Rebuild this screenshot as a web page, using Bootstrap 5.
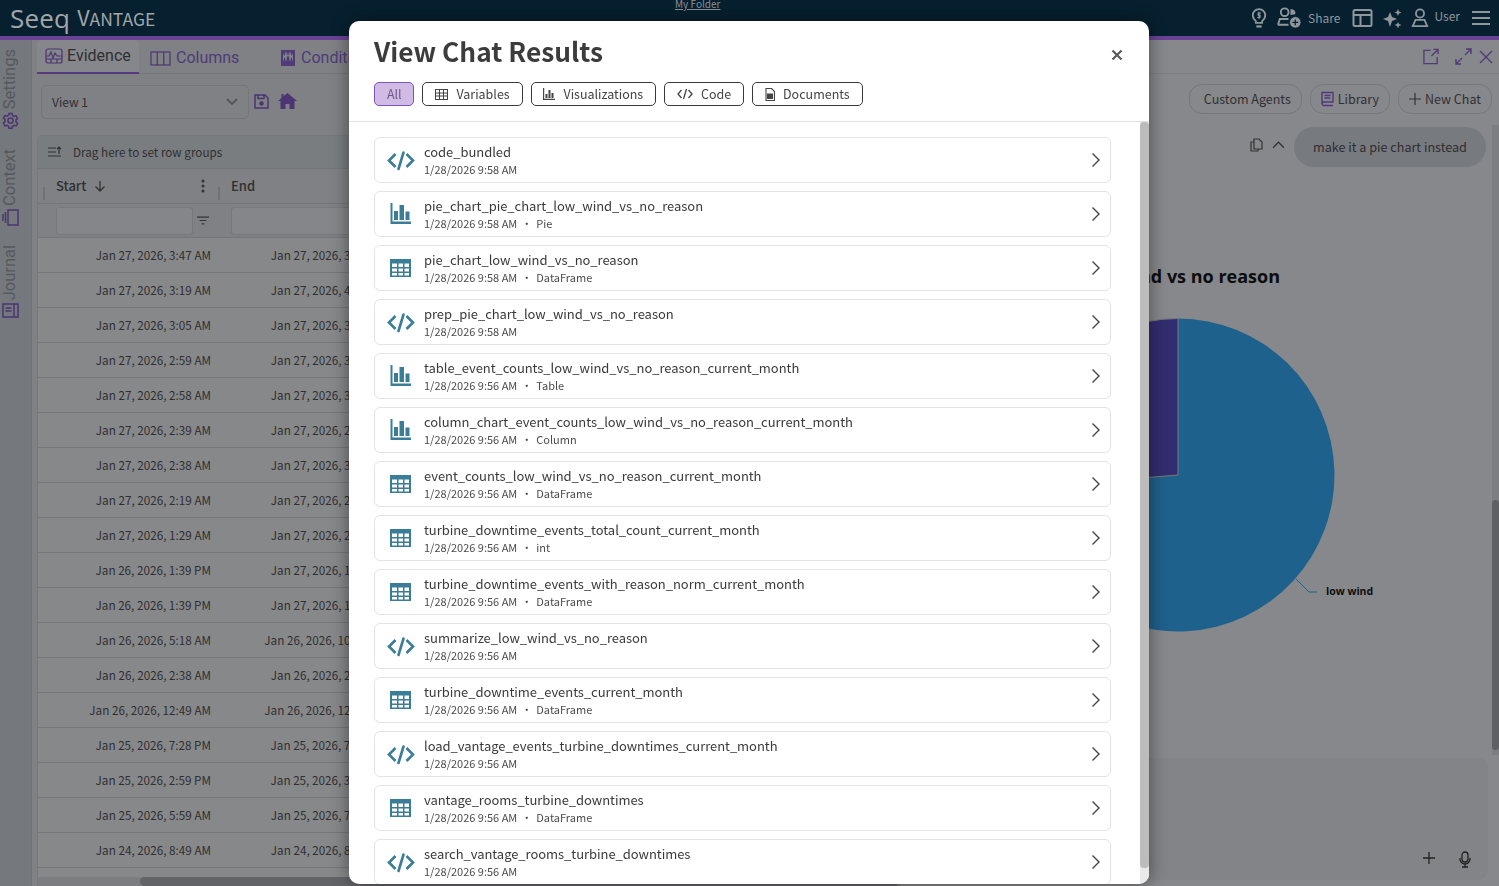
<!DOCTYPE html>
<html lang="en">
<head>
  <meta charset="UTF-8">
  <meta name="viewport" content="width=device-width, initial-scale=1">
  <title>Seeq Vantage</title>
  <link href="https://cdn.jsdelivr.net/npm/bootstrap@5.3.2/dist/css/bootstrap.min.css" rel="stylesheet">
  <style>
    html, body { height: 100%; overflow: hidden; }
    body { font-family: "Noto Sans CJK SC", "Noto Sans", sans-serif; background: #87888b; color: #2c2c2e; }
    svg { display: block; flex-shrink: 0; }

    .top-bar { height: 36px; background: #07202f; color: #8f979c; position: relative; }
    .logo-main { font-family: "Open Sans", sans-serif; font-size: 26px; font-weight: 500; line-height: 34px; letter-spacing: .2px; color: #a2a7aa; margin-left: 10px; }
    .logo-sub { font-size: 21.5px; line-height: 36px; margin-left: 7px; color: #a2a7aa; }
    .logo-sub small { font-size: 17.5px; }
    .folder-link { position: absolute; left: 675px; top: -3px; font-size: 10px; line-height: 13px; color: #8b9296; }
    .top-tools { margin-right: 9px; }
    .top-label { font-size: 12px; line-height: 16px; color: #8f979c; }
    .share-label { margin: 0 12px 0 6px; }
    .user-label { margin: 0 12px 5px 5px; }
    .tool-gap { margin-right: 9px; }
    .bulb-gap { margin-right: 10px; }
    .accent-bar { height: 4px; background: #6a4397; }

    .work-area { height: 846px; }
    .side-rail { width: 32px; background: #75787c; border-right: 1px solid #6f7276; padding: 9px 11px 0 0; }
    .rail-item { color: #55585c; font-family: Roboto, sans-serif; font-size: 16.5px; line-height: 20px; height: 100px; }
    .rail-item.mid { height: 96px; }
    .rail-item span { writing-mode: vertical-rl; transform: rotate(180deg); }
    .rail-item svg { margin-top: 3px; }

    .left-pane { width: 868px; background: #7f8184; padding-left: 5px; }
    .tab-row { height: 34px; border-bottom: 1px solid #74777a; }
    .pane-tab { font-family: Roboto, sans-serif; font-size: 16px; line-height: 20px; color: #4f3b78; height: 34px; padding-top: 2px; }
    .pane-tab.on { color: #2f2f33; background: #85878a; border-bottom: 2px solid #573a80; border-radius: 5px 5px 0 0; width: 102px; padding: 0 0 0 8px; gap: 4px; }
    .tab-columns { margin-left: 11px; width: 131px; gap: 5px; }
    .tab-conditions { gap: 6px; }
    .view-row { height: 61px; padding: 11px 0 0 4px; }
    .view-pick { width: 208px; height: 34px; border: 1px solid #74767a; border-radius: 5px; font-size: 12px; padding: 0 10px; color: #2f2f33; }
    .save-ico { margin: 9px 0 0 5px; }
    .home-ico { margin: 8px 0 0 9px; }

    .data-grid { border: 1px solid #76787b; border-bottom: 0; border-radius: 5px 0 0 0; font-size: 11.7px; color: #2f2f31; background: #87888a; height: 751px; overflow: hidden; position: relative; }
    .group-bar { height: 33px; background: #7a7d80; border-bottom: 1px solid #747679; padding: 0 0 1px 10px; gap: 11px; }
    .head-row { height: 35px; background: #7f8184; border-bottom: 1px solid #747679; font-size: 13px; font-weight: 500; }
    .head-cell { width: 175px; padding-left: 18px; position: relative; }
    .head-cell::before { content: ""; position: absolute; left: 5px; top: 11px; height: 13px; width: 2px; background: #6f7275; }
    .head-dots { position: absolute; left: 163px; }
    .filter-row { height: 34px; background: #7f8184; border-bottom: 1px solid #747679; }
    .filter-cell { width: 175px; padding-left: 18px; gap: 4px; }
    .filter-box { width: 137px; height: 28px; border: 1px solid #76787b; border-radius: 3px; background: #85868a; }
    .grid-line { height: 35px; border-bottom: 1px solid #747679; }
    .grid-val { width: 175px; text-align: right; padding-right: 2px; white-space: nowrap; }
    .grid-scroll { position: absolute; left: 0; right: 0; bottom: 0; height: 9px; background: #7b7d80; }
    .grid-thumb { position: absolute; left: 102px; right: 0; top: 0; bottom: 0; background: #636468; border-radius: 5px; }

    .right-pane { width: 599px; position: relative; background: #87888b; padding-right: 7px; }
    .right-top { height: 34px; border-bottom: 1px solid #7d7f82; margin-right: -7px; padding-right: 6px; }
    .open-ico { margin-right: 16px; }
    .expand-ico { margin-right: 7px; }
    .tool-row { gap: 8px; padding-top: 10px; height: 53px; }
    .chat-pill { height: 30px; border: 1px solid #75777a; border-radius: 13px; padding: 0 10px; font-size: 12.5px; color: #303033; gap: 4px; }
    .pill-agents { padding-left: 14px; }
    .user-msg { height: 40px; gap: 9px; padding-right: 6px; }
    .msg-bubble { background: #777a7e; width: 192px; height: 40px; border-radius: 20px; font-size: 12.6px; color: #2e2e31; }
    .chart-shot { margin-top: 97px; }
    .ask-box { position: absolute; left: 0; right: 11px; bottom: 6px; height: 122px; background: #838487; border-radius: 10px; gap: 24px; padding: 0 17px 12px 0; }
    .pane-track { position: absolute; right: 0; top: 85px; height: 630px; width: 7px; background: #7d7e81; }
    .pane-thumb { position: absolute; left: 0; right: 0; top: 375px; height: 250px; background: #5f6063; border-radius: 4px; }

    .results-modal { display: block; }
    .results-dialog { width: 800px; max-width: 800px; margin: 21px 0 0 349px; height: 863px; }
    .results-dialog .modal-content { height: 863px; border: 0; border-radius: 10px; box-shadow: 0 0 18px rgba(0, 0, 0, .45); overflow: hidden; color: #3b3b3b; }
    .results-head { height: 101px; padding: 0 25px; border-bottom: 1px solid #e2e2e2; position: relative; }
    .results-title { font-size: 26.3px; line-height: 36px; font-weight: 600; padding-top: 12px; margin: 0; color: #3c3c3c; box-sizing: content-box; }
    .close-x { position: absolute; right: 26px; top: 28px; width: 12px; height: 12px; padding: 0; border: 0; background: none; }
    .pick-row { gap: 8px; margin-top: 13px; }
    .pick-btn { height: 24px; border: 1px solid #3a3a3a; border-radius: 5px; font-size: 12.5px; line-height: 20px; padding: 0 11.9px; gap: 8px; background: #fff; color: #444; }
    .pick-btn.on { background: #cfbbe3; border-color: #7f52b3; color: #74598f; }
    .results-body { height: 762px; }
    .results-list { overflow: hidden; padding: 15px 29px 0 25px; }
    .list-track { width: 9px; background: #e9e9e9; position: relative; }
    .list-thumb { position: absolute; left: 0; right: 0; top: 0; height: 746px; background: #bcbcbc; border-radius: 4px; }
    .result-item { height: 46px; margin-bottom: 8px; border: 1px solid #e3e3e6; border-radius: 6px; padding: 0 8px 0 12px; }
    .result-ico { width: 28px; height: 28px; margin-right: 9px; color: #3a7d97; }
    .result-name { font-size: 13px; line-height: 18px; color: #3a3a3a; letter-spacing: -.05px; }
    .result-meta { font-size: 11px; line-height: 17px; color: #4b4b4b; }
    .result-meta i { font-style: normal; margin: 0 4px; }
    .result-next { width: 12px; height: 16px; color: #444; }
  </style>
</head>
<body>

<!-- ICONS -->
<svg width="0" height="0" class="position-absolute">
  <symbol id="ic-code" viewBox="0 0 28 28"><path d="M8.500 8 2 14.500 8.500 21M19.500 8 26 14.500 19.500 21" fill="none" stroke="currentColor" stroke-width="2.600"/><path d="M16.500 6.500 11.500 23" fill="none" stroke="currentColor" stroke-width="2.600" stroke-linecap="round"/></symbol>
  <symbol id="ic-bars" viewBox="0 0 28 28"><path fill="currentColor" d="M3.500 3h2v18.500H24V24H3.500zM7 11h4v9H7zM12.500 5H17v15h-4.500zM18.500 11.500h4V20h-4z"/></symbol>
  <symbol id="ic-table" viewBox="0 0 28 28"><path fill-rule="evenodd" fill="currentColor" d="M3 5h21v18H3zM5 9.500v3.500h5v-3.500zM11.500 9.500v3.500h4.500v-3.500zM17.500 9.500v3.500h4.500v-3.500zM5 14.500V17.500h5v-3zM11.500 14.500v3h4.500v-3zM17.500 14.500v3h4.500v-3zM5 19v2.500h5V19zM11.500 19v2.500h4.500V19zM17.500 19v2.500h4.500V19z"/></symbol>
  <symbol id="ic-next" viewBox="0 0 12 16"><path d="M2.500 1.500 9 8l-6.500 6.500" fill="none" stroke="currentColor" stroke-width="1.400"/></symbol>
</svg>

<!-- TOP BAR -->
<header class="top-bar d-flex align-items-center">
  <span class="logo-main">Seeq</span>
  <span class="logo-sub">V<small>ANTAGE</small></span>
  <a class="folder-link" href="#">My Folder</a>
  <div class="top-tools d-flex align-items-center ms-auto">
    <svg class="bulb-gap" width="16" height="24" viewBox="0 0 18 24" fill="none" stroke="#8f979c" stroke-width="2"><path d="M5.500 15.500C3 13.500 2 11.500 2 9a7 7 0 0 1 14 0c0 2.500-1 4.500-3.500 6.500v2h-7z"/><path d="M6 21.500h6" stroke-width="2.500"/><path d="M11 6.500H8v2.500h2.200v2.500H7M9 5v8" stroke-width="1.200"/></svg>
    <svg width="25" height="24" viewBox="0 0 26 24" fill="none" stroke="#8f979c" stroke-width="2"><circle cx="8" cy="6" r="4"/><path d="M1 19l2-6h9M1 19h11"/><path d="M14 3a4 4 0 0 1 5 5l-5 1z" fill="#8f979c" stroke="none"/><circle cx="19" cy="16.500" r="6" fill="#8f979c" stroke="#07202f" stroke-width="1"/><path d="M19 13.500v6M16 16.500h6" stroke="#07202f" stroke-width="1.300"/></svg>
    <span class="top-label share-label">Share</span>
    <svg class="tool-gap" width="21" height="18" viewBox="0 0 20 18" fill="none" stroke="#8f979c" stroke-width="2"><rect x="1" y="1" width="18" height="16" rx="1.500"/><path d="M1 6h18M8 6v11"/></svg>
    <svg class="tool-gap" width="20" height="21" viewBox="0 0 20 21" fill="#8f979c"><path d="M8 4l2 5 5 2-5 2-2 6-2-6-5-2 5-2zM16 1l1 2.500L19.500 4.500 17 5.500 16 8 15 5.500 12.500 4.500 15 3.500zM16 14l1 2 2.500 1-2.500 1-1 2.500-1-2.500-2.500-1 2.500-1z"/></svg>
    <svg width="18" height="22" viewBox="0 0 20 22" fill="none" stroke="#8f979c" stroke-width="2"><circle cx="10" cy="6" r="4.500"/><path d="M5 13h10l3 7H2z"/></svg>
    <span class="top-label user-label">User</span>
    <svg width="18" height="16" viewBox="0 0 18 16" stroke="#8f979c" stroke-width="2.200"><path d="M0 2h18M0 8h18M0 14h18"/></svg>
  </div>
</header>
<div class="accent-bar"></div>

<div class="work-area d-flex">

  <!-- SIDE RAIL -->
  <nav class="side-rail flex-shrink-0">
    <div class="rail-item d-flex flex-column align-items-center">
      <span>Settings</span>
      <svg width="17" height="17" viewBox="0 0 17 17" fill="none" stroke="#4b3572" stroke-width="1.500"><circle cx="8.500" cy="8.500" r="2.600"/><path d="M7 1.500h3l.4 2 1.700 1 2-.6 1.400 2.600-1.500 1.400v2l1.500 1.400-1.400 2.600-2-.6-1.700 1-.4 2H7l-.4-2-1.700-1-2 .6L1.500 11l1.500-1.400v-2L1.500 6.200l1.400-2.600 2 .6 1.700-1z"/></svg>
    </div>
    <div class="rail-item mid d-flex flex-column align-items-center">
      <span>Context</span>
      <svg width="17" height="17" viewBox="0 0 17 17" fill="none" stroke="#4b3572" stroke-width="1.500"><rect x="6" y="1" width="10" height="15"/><path d="M3.500 3v11M1 5v7"/></svg>
    </div>
    <div class="rail-item d-flex flex-column align-items-center">
      <span>Journal</span>
      <svg width="17" height="15" viewBox="0 0 17 15" fill="none" stroke="#4b3572" stroke-width="1.500"><rect x="1" y="1" width="15" height="13"/><path d="M12 1v13M3.500 5h6M3.500 8h6"/></svg>
    </div>
  </nav>

  <!-- LEFT PANE -->
  <section class="left-pane flex-shrink-0">
    <div class="tab-row d-flex">
      <div class="pane-tab on d-flex align-items-center">
        <svg width="18" height="16" viewBox="0 0 18 16" fill="none" stroke="#4b3572" stroke-width="1.200"><rect x="1" y="1" width="16" height="14" rx="2"/><path d="M1 8h3l2-4 2 6 2-5 2 3h5M1 11h16M6 11v4M12 11v4"/></svg>
        <span>Evidence</span>
      </div>
      <div class="pane-tab tab-columns d-flex align-items-center">
        <svg width="21" height="15" viewBox="0 0 21 15" fill="none" stroke="#4f3b78" stroke-width="1.300"><rect x="1" y="1" width="19" height="13"/><path d="M7.300 1v13M13.700 1v13"/></svg>
        <span>Columns</span>
      </div>
      <div class="pane-tab tab-conditions d-flex align-items-center">
        <svg width="14" height="16" viewBox="0 0 14 16" fill="#4f3b78"><path fill-rule="evenodd" d="M0 0h14v16H0zM2 3v9l1.500-5L5 12l2-9 2 9 1.500-5L12 12V3l-1.500 3L9 1 7 7 5 1 3.500 6z"/></svg>
        <span>Conditions</span>
      </div>
    </div>
    <div class="view-row d-flex">
      <div class="view-pick d-flex align-items-center justify-content-between">
        <span>View 1</span>
        <svg width="12" height="8" viewBox="0 0 12 8" fill="none" stroke="#55575a" stroke-width="1.800"><path d="M1 1l5 5 5-5"/></svg>
      </div>
      <svg class="save-ico" width="15" height="15" viewBox="0 0 15 15" fill="none" stroke="#4b3572" stroke-width="1.500"><path d="M1 1h10l3 3v10H1z"/><path d="M4 1v3.500h6V1"/><circle cx="7.500" cy="9.500" r="1.500" fill="#4b3572"/></svg>
      <svg class="home-ico" width="19" height="16" viewBox="0 0 19 16" fill="#4b3572"><path d="M9.500 0 19 8h-2.500v8H11.500v-5h-4v5H2.500V8H0l3.500-3V1h2v2.300z"/></svg>
    </div>
    <div class="data-grid">
      <div class="group-bar d-flex align-items-center">
        <svg width="14" height="12" viewBox="0 0 14 12" fill="none" stroke="#333" stroke-width="1.200"><path d="M0 2h8M0 6h8M0 10h13M11 8V1.500M9 3l2-2 2 2"/></svg>
        <span>Drag here to set row groups</span>
      </div>
      <div class="head-row d-flex align-items-center">
        <div class="head-cell d-flex align-items-center">
          <span>Start</span>
          <svg width="12" height="12" viewBox="0 0 12 12" fill="none" stroke="#333" stroke-width="1.300" class="ms-2"><path d="M6 1v10M1.500 6.500 6 11l4.500-4.500"/></svg>
          <svg class="head-dots" width="4" height="14" viewBox="0 0 4 14" fill="#333"><circle cx="2" cy="2" r="1.500"/><circle cx="2" cy="7" r="1.500"/><circle cx="2" cy="12" r="1.500"/></svg>
        </div>
        <div class="head-cell"><span>End</span></div>
      </div>
      <div class="filter-row d-flex align-items-center">
        <div class="filter-cell d-flex align-items-center">
          <div class="filter-box"></div>
          <svg width="12" height="9" viewBox="0 0 14 10" stroke="#333" stroke-width="1.300"><path d="M0 1h14M3 5h8M5.500 9h3"/></svg>
        </div>
        <div class="filter-cell d-flex align-items-center"><div class="filter-box"></div></div>
      </div>
      <div id="gridRows"></div>
      <div class="grid-scroll"><div class="grid-thumb"></div></div>
    </div>
  </section>

  <!-- RIGHT PANE -->
  <section class="right-pane flex-grow-1">
    <div class="right-top d-flex align-items-center justify-content-end">
      <svg class="open-ico" width="16" height="17" viewBox="0 0 17 17" fill="none" stroke="#4f3b78" stroke-width="1.400"><path d="M8 2H1v14h14V9M9 8l7-7M11 1h5v5"/></svg>
      <svg class="expand-ico" width="17" height="17" viewBox="0 0 17 17" fill="none" stroke="#4f3b78" stroke-width="1.400"><path d="M1 16l6-6M1 11v5h5M16 1l-6 6M11 1h5v5"/></svg>
      <svg width="14" height="14" viewBox="0 0 14 14" fill="none" stroke="#4f3b78" stroke-width="1.400"><path d="M1 1l12 12M13 1 1 13"/></svg>
    </div>
    <div class="tool-row d-flex justify-content-end">
      <div class="chat-pill pill-agents d-flex align-items-center">Custom Agents</div>
      <div class="chat-pill d-flex align-items-center">
        <svg width="13" height="16" viewBox="0 0 13 16" fill="none" stroke="#4f3b78" stroke-width="1.400"><path d="M1 13V1.500h11V11H2.500a1.800 1.800 0 0 0 0 3.500H12M3.500 4.500h6M3.500 7h6"/></svg>
        <span>Library</span>
      </div>
      <div class="chat-pill d-flex align-items-center">
        <svg width="12" height="12" viewBox="0 0 12 12" stroke="#333" stroke-width="1.200"><path d="M6 0v12M0 6h12"/></svg>
        <span>New Chat</span>
      </div>
    </div>
    <div class="user-msg d-flex justify-content-end align-items-center">
      <svg width="13" height="14" viewBox="0 0 13 14" fill="none" stroke="#333" stroke-width="1.200" class="mb-1"><path d="M4 1h5l3 3v7H4zM4 4H1v9h7v-2"/></svg>
      <svg width="13" height="8" viewBox="0 0 12 7" fill="none" stroke="#333" stroke-width="1.200" class="mb-1"><path d="M1 6l5-5 5 5"/></svg>
      <div class="msg-bubble d-flex align-items-center justify-content-center">make it a pie chart instead</div>
    </div>
    <svg class="chart-shot" width="592" height="400" viewBox="0 0 592 400">
      <text x="380" y="19" text-anchor="end" font-family="'Open Sans', sans-serif" font-weight="700" font-size="18" fill="#0d0d0f">Low wind vs no reason</text>
      <path d="M278 211 L278 54.500 A156.500 156.500 0 1 1 122 224 Z" fill="#1e618c"/>
      <path d="M278 211 L122 224 A156.500 156.500 0 0 1 278 54.500 Z" fill="#322d6e" stroke="#77787c" stroke-width="1"/>
      <path d="M396 315l13 13h8" fill="none" stroke="#1e618c" stroke-width="1"/>
      <text x="426" y="331" font-family="'Open Sans', sans-serif" font-weight="700" font-size="10.500" fill="#0d0d0f">low wind</text>
    </svg>
    <div class="ask-box d-flex align-items-end justify-content-end">
      <svg width="12" height="12" viewBox="0 0 12 12" stroke="#222" stroke-width="1.300" class="mb-1"><path d="M6 0v12M0 6h12"/></svg>
      <svg width="12" height="17" viewBox="0 0 12 17" fill="none" stroke="#222" stroke-width="1.300"><rect x="3" y="1" width="6" height="10" rx="3"/><path d="M1 7v1a5 5 0 0 0 10 0V7M6 13v3M3 16h6"/></svg>
    </div>
    <div class="pane-track"><div class="pane-thumb"></div></div>
  </section>
</div>

<!-- MODAL -->
<div class="modal results-modal" tabindex="-1">
  <div class="modal-dialog results-dialog">
    <div class="modal-content">
      <div class="results-head">
        <h1 class="results-title">View Chat Results</h1>
        <button type="button" class="close-x" aria-label="Close"><svg width="12" height="12" viewBox="0 0 12 12" stroke="#5a5a5a" stroke-width="2.200"><path d="M1.500 1.500l9 9M10.500 1.500l-9 9"/></svg></button>
        <div class="pick-row d-flex">
          <button class="pick-btn on d-flex align-items-center">All</button>
          <button class="pick-btn d-flex align-items-center"><svg width="13" height="11" viewBox="0 0 13 11" fill="none" stroke="#444"><rect x=".5" y=".5" width="12" height="10"/><path d="M.5 4h12M.5 7h12M4.500 .5v10M8.500 .5v10"/></svg>Variables</button>
          <button class="pick-btn d-flex align-items-center"><svg width="12" height="12" viewBox="0 0 12 12" fill="#444"><path d="M0 0h1.200v10.800H12V12H0zM2.500 6h2v4h-2zM5.500 2h2v8h-2zM8.500 5h2v5h-2z"/></svg>Visualizations</button>
          <button class="pick-btn d-flex align-items-center"><svg width="16" height="12" viewBox="0 0 16 12" fill="none" stroke="#444" stroke-width="1.300"><path d="M4.500 2 1 6l3.500 4M11.500 2 15 6l-3.500 4M9.500 1l-3 10"/></svg>Code</button>
          <button class="pick-btn d-flex align-items-center"><svg width="10" height="13" viewBox="0 0 10 13" fill="none" stroke="#444" stroke-width="1.100"><path d="M1 .5h5.500L9.500 3.500v9H1z"/><path d="M2.500 6h5v4.500h-5z" fill="#444"/></svg>Documents</button>
        </div>
      </div>
      <div class="results-body d-flex">
        <div class="results-list flex-grow-1" id="resultList"></div>
        <div class="list-track flex-shrink-0"><div class="list-thumb"></div></div>
      </div>
    </div>
  </div>
</div>

<script src="https://cdn.jsdelivr.net/npm/bootstrap@5.3.2/dist/js/bootstrap.bundle.min.js"></script>
<script>
  const gridData = [
    ['Jan 27, 2026, 3:47 AM', 'Jan 27, 2026, 3:58 AM'], ['Jan 27, 2026, 3:19 AM', 'Jan 27, 2026, 4:02 AM'],
    ['Jan 27, 2026, 3:05 AM', 'Jan 27, 2026, 3:31 AM'], ['Jan 27, 2026, 2:59 AM', 'Jan 27, 2026, 3:12 AM'],
    ['Jan 27, 2026, 2:58 AM', 'Jan 27, 2026, 3:20 AM'], ['Jan 27, 2026, 2:39 AM', 'Jan 27, 2026, 2:51 AM'],
    ['Jan 27, 2026, 2:38 AM', 'Jan 27, 2026, 3:04 AM'], ['Jan 27, 2026, 2:19 AM', 'Jan 27, 2026, 2:44 AM'],
    ['Jan 27, 2026, 1:29 AM', 'Jan 27, 2026, 2:10 AM'], ['Jan 26, 2026, 1:39 PM', 'Jan 27, 2026, 1:15 AM'],
    ['Jan 26, 2026, 1:39 PM', 'Jan 27, 2026, 1:15 AM'], ['Jan 26, 2026, 5:18 AM', 'Jan 26, 2026, 10:02 AM'],
    ['Jan 26, 2026, 2:38 AM', 'Jan 26, 2026, 2:59 AM'], ['Jan 26, 2026, 12:49 AM', 'Jan 26, 2026, 12:58 AM'],
    ['Jan 25, 2026, 7:28 PM', 'Jan 25, 2026, 7:49 PM'], ['Jan 25, 2026, 2:59 PM', 'Jan 25, 2026, 3:21 PM'],
    ['Jan 25, 2026, 5:59 AM', 'Jan 25, 2026, 7:11 AM'], ['Jan 24, 2026, 8:49 AM', 'Jan 24, 2026, 8:59 AM']
  ];
  document.getElementById('gridRows').innerHTML = gridData.map(r =>
    `<div class="grid-line d-flex align-items-center"><div class="grid-val">${r[0]}</div><div class="grid-val">${r[1]}</div></div>`
  ).join('');

  const results = [
    ['code', 'code_bundled', '1/28/2026 9:58 AM', ''],
    ['bars', 'pie_chart_pie_chart_low_wind_vs_no_reason', '1/28/2026 9:58 AM', 'Pie'],
    ['table', 'pie_chart_low_wind_vs_no_reason', '1/28/2026 9:58 AM', 'DataFrame'],
    ['code', 'prep_pie_chart_low_wind_vs_no_reason', '1/28/2026 9:58 AM', ''],
    ['bars', 'table_event_counts_low_wind_vs_no_reason_current_month', '1/28/2026 9:56 AM', 'Table'],
    ['bars', 'column_chart_event_counts_low_wind_vs_no_reason_current_month', '1/28/2026 9:56 AM', 'Column'],
    ['table', 'event_counts_low_wind_vs_no_reason_current_month', '1/28/2026 9:56 AM', 'DataFrame'],
    ['table', 'turbine_downtime_events_total_count_current_month', '1/28/2026 9:56 AM', 'int'],
    ['table', 'turbine_downtime_events_with_reason_norm_current_month', '1/28/2026 9:56 AM', 'DataFrame'],
    ['code', 'summarize_low_wind_vs_no_reason', '1/28/2026 9:56 AM', ''],
    ['table', 'turbine_downtime_events_current_month', '1/28/2026 9:56 AM', 'DataFrame'],
    ['code', 'load_vantage_events_turbine_downtimes_current_month', '1/28/2026 9:56 AM', ''],
    ['table', 'vantage_rooms_turbine_downtimes', '1/28/2026 9:56 AM', 'DataFrame'],
    ['code', 'search_vantage_rooms_turbine_downtimes', '1/28/2026 9:56 AM', '']
  ];
  document.getElementById('resultList').innerHTML = results.map(r => `
    <div class="result-item d-flex align-items-center">
      <svg class="result-ico"><use href="#ic-${r[0]}"/></svg>
      <div class="flex-grow-1">
        <div class="result-name">${r[1]}</div>
        <div class="result-meta">${r[2]}${r[3] ? `<i>•</i>${r[3]}` : ''}</div>
      </div>
      <svg class="result-next"><use href="#ic-next"/></svg>
    </div>`).join('');
</script>
</body>
</html>
